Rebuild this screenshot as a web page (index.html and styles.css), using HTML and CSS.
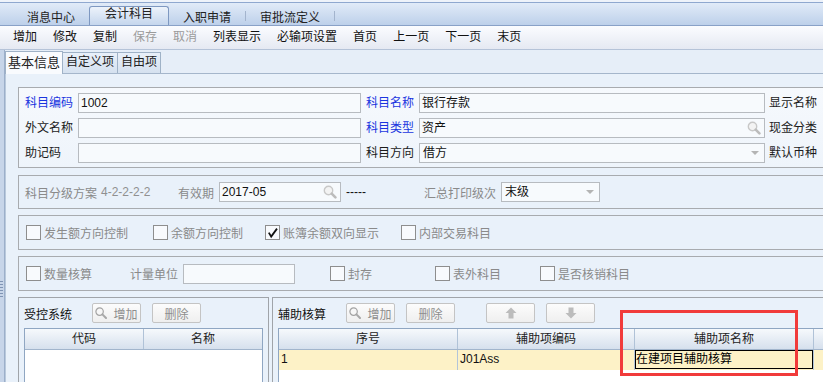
FILE: index.html
```html
<!DOCTYPE html>
<html lang="zh-CN">
<head>
<meta charset="utf-8">
<title>会计科目</title>
<link rel="stylesheet" href="styles.css">
</head>
<body>
<div class="topbar">
  <span class="ttab">消息中心</span>
  <span class="ttab active">会计科目</span>
  <span class="ttab">入职申请</span>
  <span class="tsep"></span>
  <span class="ttab">审批流定义</span>
  <span class="tsep"></span>
</div>
<div class="toolbar">
  <span>增加</span><span>修改</span><span>复制</span><span class="dis">保存</span><span class="dis">取消</span><span>列表显示</span><span>必输项设置</span><span>首页</span><span>上一页</span><span>下一页</span><span>末页</span>
</div>
<div class="work">
  <div class="grip"><div class="dots"></div></div>
  <div class="pane">
    <div class="subtabs">
      <span class="stab active">基本信息</span>
      <span class="stab">自定义项</span>
      <span class="stab">自由项</span>
    </div>
    <div class="content">
      <div class="gbox box1">
        <div class="frow">
          <span class="flabel blue">科目编码</span>
          <div class="inp w283">1002</div>
          <span class="flabel blue ml5">科目名称</span>
          <div class="inp w346">银行存款</div>
          <span class="flabel ml4">显示名称</span>
        </div>
        <div class="frow">
          <span class="flabel">外文名称</span>
          <div class="inp w283"></div>
          <span class="flabel blue ml5">科目类型</span>
          <div class="inp w346"><span>资产</span>
            <svg class="ico" width="14" height="14" viewBox="0 0 14 14"><circle cx="5.5" cy="5.5" r="4.2" fill="#f3f3f3" stroke="#c8c8c8" stroke-width="1.4"/><path d="M8.7 8.7 L12.4 12.4" stroke="#bcbcbc" stroke-width="2.6" stroke-linecap="round"/></svg>
          </div>
          <span class="flabel ml4">现金分类</span>
        </div>
        <div class="frow">
          <span class="flabel">助记码</span>
          <div class="inp w283"></div>
          <span class="flabel ml5">科目方向</span>
          <div class="inp w346 sel"><span>借方</span><span class="caret"></span></div>
          <span class="flabel ml4">默认币种</span>
        </div>
      </div>

      <div class="gbox box2 gray">
        <span class="t72">科目分级方案</span>
        <span class="scheme">4-2-2-2-2</span>
        <span>有效期</span>
        <div class="inp w122 ml5 dark"><span>2017-05</span>
          <svg class="ico" width="14" height="14" viewBox="0 0 14 14"><circle cx="5.5" cy="5.5" r="4.2" fill="#f3f3f3" stroke="#c8c8c8" stroke-width="1.4"/><path d="M8.7 8.7 L12.4 12.4" stroke="#bcbcbc" stroke-width="2.6" stroke-linecap="round"/></svg>
        </div>
        <span class="dash">-----</span>
        <span>汇总打印级次</span>
        <div class="inp w99 ml5 dark sel2"><span>末级</span><span class="caret"></span></div>
      </div>

      <div class="gbox box3 gray">
        <div class="cbi w127"><span class="cb"></span>发生额方向控制</div>
        <div class="cbi w112"><span class="cb"></span>余额方向控制</div>
        <div class="cbi w136"><span class="cb"><svg width="13" height="13" viewBox="0 0 13 13"><path d="M2.8 6.6 L5.2 10.6 L11 2.6" fill="none" stroke="#111" stroke-width="1.8"/></svg></span>账簿余额双向显示</div>
        <div class="cbi"><span class="cb"></span>内部交易科目</div>
      </div>

      <div class="gbox box4 gray">
        <div class="cbi w104"><span class="cb"></span>数量核算</div>
        <span>计量单位</span>
        <div class="inp w112 ml5"></div>
        <div class="cbi w105 ml35"><span class="cb"></span>封存</div>
        <div class="cbi w105"><span class="cb"></span>表外科目</div>
        <div class="cbi"><span class="cb"></span>是否核销科目</div>
      </div>

      <div class="lower">
        <div class="lpanel">
          <div class="phead">
            <span class="ptitle">受控系统</span>
            <span class="btn ml20"><svg width="12" height="12" viewBox="0 0 12 12"><circle cx="4.6" cy="4.6" r="3.7" fill="#f7f7f7" stroke="#a3a3a3" stroke-width="1.2"/><path d="M7.4 7.4 L11 11" stroke="#a8a8a8" stroke-width="2" stroke-linecap="round"/></svg>增加</span>
            <span class="btn ml11">删除</span>
          </div>
          <div class="grid">
            <div class="ghead"><span class="gh c119">代码</span><span class="gh last">名称</span></div>
          </div>
        </div>
        <div class="rpanel">
          <div class="phead">
            <span class="ptitle">辅助核算</span>
            <span class="btn ml20"><svg width="12" height="12" viewBox="0 0 12 12"><circle cx="4.6" cy="4.6" r="3.7" fill="#f7f7f7" stroke="#a3a3a3" stroke-width="1.2"/><path d="M7.4 7.4 L11 11" stroke="#a8a8a8" stroke-width="2" stroke-linecap="round"/></svg>增加</span>
            <span class="btn ml11">删除</span>
            <span class="btn ml31"><svg width="12" height="12" viewBox="0 0 12 12"><path d="M6 0.5 L11.5 6 L8.5 6 L8.5 11.5 L3.5 11.5 L3.5 6 L0.5 6 Z" fill="#bcbcbc"/></svg></span>
            <span class="btn ml11"><svg width="12" height="12" viewBox="0 0 12 12"><path d="M6 11.5 L11.5 6 L8.5 6 L8.5 0.5 L3.5 0.5 L3.5 6 L0.5 6 Z" fill="#bcbcbc"/></svg></span>
          </div>
          <div class="grid">
            <div class="ghead"><span class="gh c179">序号</span><span class="gh c177">辅助项编码</span><span class="gh c179">辅助项名称</span><span class="gh last"></span></div>
            <div class="grow"><span class="gc c179">1</span><span class="gc c177">J01Ass</span><span class="gc c179 editc"><span class="edit">在建项目辅助核算</span></span><span class="gc last"></span></div>
          </div>
        </div>
      </div>
    </div>
  </div>
</div>
<div class="mark"></div>
</body>
</html>
```

FILE: styles.css
```css
*{box-sizing:border-box;margin:0;padding:0}
html,body{width:823px;height:382px;overflow:hidden}
body{background:#eef3fa;font-family:"Liberation Sans","Noto Sans CJK SC",sans-serif;font-size:12px;color:#1b1b1b;position:relative}

.topbar{margin-top:2px;height:24px;border-top:1px solid #8fa8cf;border-bottom:1px solid #89a1c7;background:linear-gradient(#e1ebf8,#bdd0ea);display:flex;align-items:flex-end;gap:14px;padding-left:27px}
.ttab{line-height:14px;color:#222;white-space:nowrap}
.ttab.active{padding:0 15px 4px;border:1px solid #7e98c1;border-bottom:0;border-radius:3px 3px 0 0;background:linear-gradient(#edf3fb,#c5d6ed)}
.tsep{width:1px;height:10px;background:#a3b4cd;margin-bottom:4px}

.toolbar{height:24px;border-bottom:1px solid #b5c3d8;background:linear-gradient(#fbfcff,#e5e9f2);display:flex;gap:16px;padding-left:13px;line-height:22px;color:#111;white-space:nowrap}
.toolbar .dis{color:#9b9b9b}

.work{display:flex;height:332px}
.grip{width:5px;flex:none;background:#c7d5e9;border-right:1px solid #9cafca;padding-top:231px}
.dots{height:17px;margin-right:1px;background:repeating-linear-gradient(#7f94b4 0 1px,transparent 1px 3px)}
.pane{flex:1;min-width:0;background:#e6eef8;overflow:hidden}

.subtabs{height:23px;display:flex;align-items:flex-end}
.stab{height:21px;line-height:19px;padding:0 3px;border:1px solid #9fb2c7;border-bottom:0;border-left:0;background:linear-gradient(#e9f0f9,#d5e1ef);color:#222;white-space:nowrap}
.stab.active{height:23px;margin-bottom:-1px;line-height:22px;font-size:13px;padding:0 2px;border-left:1px solid #9fb2c7;background:#f9fbfe;position:relative;z-index:1}

.content{border-top:1px solid #a5b6cb;border-left:1px solid #b9c9dc;background:#e9f1fa;padding:13px 0 0 12px;height:309px}

.gbox{width:900px;border:1px solid #a8abaf}
.box1{background:linear-gradient(#f6f9fd,#eef4fb);padding:5px 0 4px 6px}
.frow{display:flex;align-items:center;height:20px}
.frow+.frow{margin-top:5px}
.flabel{width:53px;flex:none;line-height:20px;white-space:nowrap;color:#1b1b1b}
.blue{color:#1a35df}

.inp{height:20px;flex:none;border:1px solid #b7bbc0;background:#f7fafd;padding:0 3px 0 2px;line-height:18px;color:#111;display:flex;align-items:center;justify-content:space-between;white-space:nowrap}
.w283{width:283px}
.w346{width:346px}
.w122{width:122px}
.w99{width:99px}
.w112{width:112px}
.ml4{margin-left:4px}
.ml5{margin-left:5px}
.ml11{margin-left:11px}
.ml20{margin-left:20px}
.ml31{margin-left:31px}
.ml35{margin-left:35px}
.ico{flex:none}
.sel{padding-right:5px;padding-left:3px}
.sel2{padding-left:3px;padding-right:5px}
.caret{width:0;height:0;border-left:4px solid transparent;border-right:4px solid transparent;border-top:4px solid #b4b4b4}
.dark{color:#111}

.gray{color:#8a8a8a}
.box2{margin-top:7px;height:34px;display:flex;align-items:center;padding-left:6px;white-space:nowrap}
.t72{width:76px;flex:none}
.scheme{width:77px;flex:none;color:#909090}
.dash{width:78px;flex:none;margin-left:5px;color:#111}

.box3{margin-top:6px;height:35px;display:flex;align-items:center;padding-left:7px;white-space:nowrap}
.box4{margin-top:6px;height:35px;display:flex;align-items:center;padding-left:7px;white-space:nowrap}
.cbi{display:flex;align-items:center;flex:none}
.w127{width:127px}
.w112{width:112px}
.w136{width:136px}
.w104{width:104px}
.w105{width:105px}
.cb{width:15px;height:15px;flex:none;border:1px solid #8e8e8e;background:#f8fafd;margin-right:3px;display:flex;align-items:center;justify-content:center}

.lower{display:flex;gap:3px;margin-top:6px;height:100px}
.lpanel{width:251px;flex:none;border:1px solid #a0a4a9;border-bottom:0;padding:5px 5px 0}
.rpanel{width:700px;flex:none;border:1px solid #a0a4a9;border-right:0;border-bottom:0;padding:5px 0 0 5px}
.phead{display:flex;align-items:center;height:20px}
.ptitle{width:48px;flex:none;color:#111;white-space:nowrap}
.btn{height:20px;width:49px;flex:none;border:1px solid #c4c4c4;border-radius:2px;background:linear-gradient(#fcfcfc,#efefef);display:flex;align-items:center;justify-content:center;gap:6px;color:#8e8e8e;white-space:nowrap}

.grid{margin-top:5px;border:1px solid #8fa6c2;border-bottom:0;background:#fff;height:80px}
.ghead{display:flex;height:21px;background:linear-gradient(#f6f9fc,#d6e0ed);border-bottom:1px solid #a2b5cc}
.gh{flex:none;border-right:1px solid #b0c2d7;text-align:center;line-height:20px;color:#222;white-space:nowrap}
.gh.last,.gc.last{flex:1;border-right:0}
.c119{width:119px}
.c179{width:179px}
.c177{width:177px}
.grow{display:flex;height:20px;background:#fdf2c7}
.gc{flex:none;border-right:1px solid #b3c5d9;padding-left:2px;line-height:19px;color:#111;white-space:nowrap}
.editc{padding-left:0}
.edit{display:block;height:19px;border:1px solid #000;line-height:17px;padding-left:0;color:#000}

.mark{position:absolute;left:620px;top:310px;width:178px;height:66px;border:3px solid #f13b3b}
```
